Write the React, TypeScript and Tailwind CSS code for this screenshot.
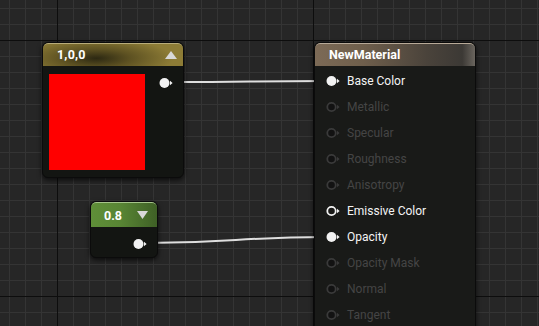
import React from "react";

type PinKind = "filled" | "hollow" | "off";

// the little round pin with its arrow, as drawn in the material graph
function Pin({ kind = "filled" }: { kind?: PinKind }) {
  const ring = kind === "off" ? "#3a3a3a" : "#f2f2f2";
  const fill = kind === "filled" ? "#f2f2f2" : kind === "hollow" ? "#1a1a18" : "#121212";
  return (
    <svg width="16" height="12" viewBox="0 0 16 12" className="shrink-0">
      <circle cx="5.5" cy="6" r={kind === "filled" ? 5 : 4.2} fill={fill} stroke={ring} strokeWidth={kind === "filled" ? 0 : 1.8} />
      <path d="M11 3.8 L13.6 6 L11 8.2 Z" fill={ring} />
    </svg>
  );
}

const inputs: { label: string; kind: PinKind }[] = [
  { label: "Base Color", kind: "filled" },
  { label: "Metallic", kind: "off" },
  { label: "Specular", kind: "off" },
  { label: "Roughness", kind: "off" },
  { label: "Anisotropy", kind: "off" },
  { label: "Emissive Color", kind: "hollow" },
  { label: "Opacity", kind: "filled" },
  { label: "Opacity Mask", kind: "off" },
  { label: "Normal", kind: "off" },
  { label: "Tangent", kind: "off" },
];

function Grid() {
  return (
    <svg className="absolute inset-0" width="539" height="326">
      <defs>
        <pattern id="minor" x="9" y="8" width="16" height="16" patternUnits="userSpaceOnUse">
          <rect x="0" y="0" width="16" height="1" fill="#343434" />
          <rect x="0" y="0" width="1" height="16" fill="#343434" />
        </pattern>
      </defs>
      <rect width="539" height="326" fill="#262626" />
      <rect width="539" height="326" fill="url(#minor)" />
      <rect x="0" y="40" width="539" height="1" fill="#0d0d0d" />
      <rect x="0" y="296" width="539" height="1" fill="#0d0d0d" />
      <rect x="57" y="0" width="1" height="326" fill="#0d0d0d" />
      <rect x="313" y="0" width="1" height="326" fill="#0d0d0d" />
    </svg>
  );
}

function Wires() {
  return (
    <svg className="absolute inset-0 pointer-events-none" width="539" height="326">
      <path d="M172 82 C 250 82, 250 81, 327 81" stroke="#dedede" strokeWidth="2" fill="none" />
      <path d="M146 243 C 236 243, 236 237, 327 237" stroke="#dedede" strokeWidth="2" fill="none" />
    </svg>
  );
}

export default function App() {
  return (
    <div
      className="relative w-[539px] h-[326px] overflow-hidden bg-[#262626] text-white"
      style={{ fontFamily: "Roboto, 'Noto Sans', sans-serif" }}
    >
      <Grid />
      <Wires />

      {/* Constant3Vector node */}
      <div className="absolute left-[42px] top-[42px] w-[142px] h-[136px] rounded-[6px] border border-[#0b0b0b] bg-[#131512] shadow-[0_2px_5px_rgba(0,0,0,0.7)] overflow-hidden">
        <div className="h-[23px] flex items-center justify-between pl-[14px] pr-[6px] border-t border-[#b9ad7a] rounded-t-[5px] bg-[radial-gradient(ellipse_55%_90%_at_38%_65%,#2c2812_0%,#5e5222_45%,#8d7c36_100%)]">
          <span className="text-[12.5px] font-bold leading-none tracking-[0.2px]">1,0,0</span>
          <svg width="12" height="8" viewBox="0 0 12 8">
            <path d="M0 8 L6 0 L12 8 Z" fill="#d8d8d8" />
          </svg>
        </div>
        <div className="flex items-start pl-[6px] pt-[8px]">
          <div className="w-[96px] h-[96px] bg-[#ff0000]" />
          <div className="ml-[14px] mt-[3px]">
            <Pin />
          </div>
        </div>
      </div>

      {/* Scalar constant node */}
      <div className="absolute left-[90px] top-[201px] w-[68px] h-[57px] rounded-[6px] border border-[#0b0b0b] bg-[#131512] shadow-[0_2px_5px_rgba(0,0,0,0.7)] overflow-hidden">
        <div className="h-[25px] flex items-center justify-between pl-[13px] pr-[9px] border-t border-[#a6c48a] rounded-t-[5px] bg-[linear-gradient(90deg,#5f8f38_0%,#588534_45%,#3f6026_100%)]">
          <span className="text-[12.5px] font-bold leading-none pt-[2px]">0.8</span>
          <svg width="11" height="8" viewBox="0 0 11 8">
            <path d="M0 0 L11 0 L5.5 8 Z" fill="#d8d8d8" />
          </svg>
        </div>
        <div className="flex justify-start pl-[42px] pt-[11px]">
          <Pin />
        </div>
      </div>

      {/* Material result node */}
      <div className="absolute left-[314px] top-[42px] w-[162px] h-[300px] rounded-[6px] border border-[#0b0b0b] bg-[#191a18] shadow-[0_2px_5px_rgba(0,0,0,0.7)] overflow-hidden">
        <div className="h-[23px] flex items-center pl-[14px] border-t border-[#b8aa98] rounded-t-[5px] bg-[linear-gradient(90deg,#7c6a56_0%,#6f5f4c_30%,#4a433b_70%,#3c3935_92%,#6a655e_100%)]">
          <span className="text-[12.5px] font-bold leading-none">NewMaterial</span>
        </div>
        <div className="flex flex-col pt-[2px]">
          {inputs.map((p) => (
            <div key={p.label} className="h-[26px] flex items-center pl-[11px] gap-[5px]">
              <Pin kind={p.kind} />
              <span
                className={
                  p.kind === "off"
                    ? "text-[12px] leading-none text-[#454545]"
                    : "text-[12px] leading-none text-[#f4f4f4]"
                }
              >
                {p.label}
              </span>
            </div>
          ))}
        </div>
      </div>
    </div>
  );
}
